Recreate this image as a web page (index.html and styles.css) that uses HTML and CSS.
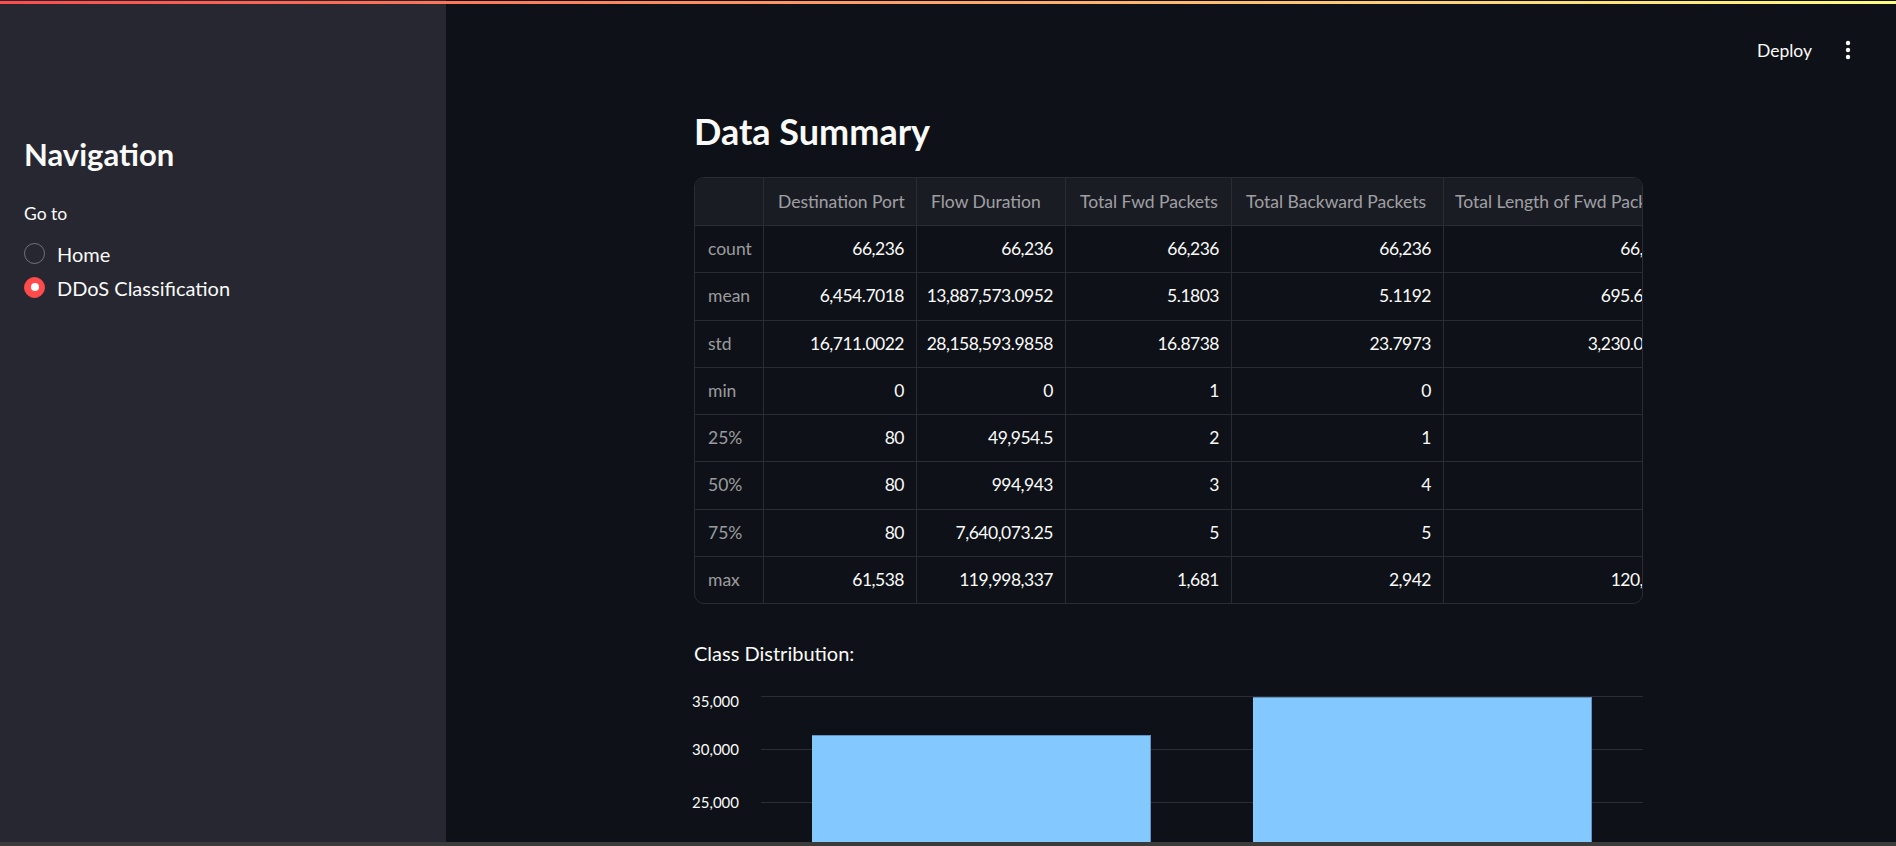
FILE: index.html
```html
<!DOCTYPE html>
<html lang="en">
<head>
<meta charset="utf-8">
<title>DDoS Classification</title>
<link rel="stylesheet" href="styles.css">
</head>
<body>
<div class="decoration"></div>
<div class="app">
  <aside class="sidebar">
    <h1 class="side-title">Navigation</h1>
    <p class="field-label">Go to</p>
    <div class="radio-group">
      <div class="radio"><span class="radio-dot"></span><span>Home</span></div>
      <div class="radio checked"><span class="radio-dot"></span><span>DDoS Classification</span></div>
    </div>
  </aside>
  <main class="main">
    <header class="topbar">
      <span class="deploy">Deploy</span>
      <span class="kebab">
        <svg width="24" height="24" viewBox="0 0 24 24"><circle cx="12" cy="5" r="2.2" fill="#fafafa"/><circle cx="12" cy="12" r="2.2" fill="#fafafa"/><circle cx="12" cy="19" r="2.2" fill="#fafafa"/></svg>
      </span>
    </header>
    <section class="content">
      <h2 class="page-title">Data Summary</h2>
      <div class="table-wrap">
        <table class="summary">
          <colgroup>
            <col class="c-idx"><col class="c-1"><col class="c-2"><col class="c-3"><col class="c-4"><col class="c-5">
          </colgroup>
          <thead>
            <tr><th></th><th>Destination Port</th><th>Flow Duration</th><th>Total Fwd Packets</th><th>Total Backward Packets</th><th class="last">Total Length of Fwd Packets</th></tr>
          </thead>
          <tbody>
            <tr><td class="idx">count</td><td>66,236</td><td>66,236</td><td>66,236</td><td>66,236</td><td>66,236</td></tr>
            <tr><td class="idx">mean</td><td>6,454.7018</td><td>13,887,573.0952</td><td>5.1803</td><td>5.1192</td><td>695.6248</td></tr>
            <tr><td class="idx">std</td><td>16,711.0022</td><td>28,158,593.9858</td><td>16.8738</td><td>23.7973</td><td>3,230.0917</td></tr>
            <tr><td class="idx">min</td><td>0</td><td>0</td><td>1</td><td>0</td><td>0</td></tr>
            <tr><td class="idx">25%</td><td>80</td><td>49,954.5</td><td>2</td><td>1</td><td>12</td></tr>
            <tr><td class="idx">50%</td><td>80</td><td>994,943</td><td>3</td><td>4</td><td>30</td></tr>
            <tr><td class="idx">75%</td><td>80</td><td>7,640,073.25</td><td>5</td><td>5</td><td>36</td></tr>
            <tr><td class="idx">max</td><td>61,538</td><td>119,998,337</td><td>1,681</td><td>2,942</td><td>120,564</td></tr>
          </tbody>
        </table>
      </div>
      <p class="caption">Class Distribution:</p>
      <div class="chart">
        <div class="y-axis">
          <span>35,000</span><span>30,000</span><span>25,000</span><span>20,000</span><span>15,000</span><span>10,000</span><span>5,000</span><span>0</span>
        </div>
        <div class="plot">
          <div class="band"><div class="bar" style="height:333px"></div></div>
          <div class="band"><div class="bar" style="height:371px"></div></div>
        </div>
      </div>
    </section>
  </main>
</div>
<div class="hscroll"></div>
</body>
</html>
```
FILE: styles.css
```css
html, body {
  margin: 0;
  height: 100%;
  overflow: hidden;
}
body {
  background: #0e1117;
  color: #fafafa;
  font-family: Lato, "Source Sans Pro", sans-serif;
}
.decoration {
  position: fixed;
  top: 1px;
  left: 0;
  right: 0;
  height: 3px;
  background: linear-gradient(90deg, #ff4b4b, #fffd80);
  z-index: 10;
}
.hscroll {
  position: fixed;
  left: 0;
  right: 0;
  bottom: 0;
  height: 4px;
  background: #3b3b3b;
  z-index: 10;
}
.app {
  display: flex;
  height: 846px;
}

/* Sidebar */
.sidebar {
  width: 446px;
  flex: none;
  box-sizing: border-box;
  background: #262730;
  padding: 136.4px 24px 0 24px;
}
.side-title {
  margin: 0;
  font-size: 31px;
  line-height: 37.2px;
  font-weight: 700;
}
.field-label {
  margin: 29px 0 0;
  font-size: 17.5px;
  line-height: 21px;
}
.radio-group {
  margin-top: 13.6px;
  display: flex;
  flex-direction: column;
}
.radio {
  display: flex;
  align-items: center;
  gap: 12px;
  height: 34px;
  font-size: 20px;
  line-height: 24px;
}
.radio-dot {
  width: 21px;
  height: 21px;
  flex: none;
  box-sizing: border-box;
  border-radius: 50%;
  border: 1.5px solid rgba(250, 250, 250, 0.35);
  display: flex;
  align-items: center;
  justify-content: center;
  margin-bottom: 2px;
}
.radio.checked .radio-dot {
  background: #ff4b4b;
  border-color: #ff4b4b;
}
.radio.checked .radio-dot::after {
  content: "";
  width: 8px;
  height: 8px;
  border-radius: 50%;
  background: #ffffff;
}

/* Main */
.main {
  flex: 1;
  min-width: 0;
  position: relative;
}
.topbar {
  position: absolute;
  top: 0;
  right: 36px;
  height: 100px;
  display: flex;
  align-items: center;
  gap: 24px;
}
.deploy {
  font-size: 17.5px;
  line-height: 21px;
}
.kebab {
  display: flex;
  width: 24px;
  height: 24px;
}
.content {
  margin-left: 248px;
  width: 949px;
  padding-top: 109.5px;
}
.page-title {
  margin: 0;
  font-size: 36px;
  line-height: 43.2px;
  font-weight: 700;
}

/* Table */
.table-wrap {
  margin-top: 24.3px;
  border: 1px solid #2a2c34;
  border-radius: 10px;
  overflow: hidden;
}
.summary {
  table-layout: fixed;
  width: 989px;
  border-collapse: separate;
  border-spacing: 0;
  font-size: 17.5px;
}
.c-idx { width: 69px; }
.c-1 { width: 153px; }
.c-2 { width: 149px; }
.c-3 { width: 166px; }
.c-4 { width: 212px; }
.c-5 { width: 240px; }
.summary th,
.summary td {
  border-right: 1px solid #2a2c34;
  border-bottom: 1px solid #2a2c34;
  white-space: nowrap;
  overflow: hidden;
  padding: 0;
}
.summary th {
  background: #1a1c24;
  color: rgba(250, 250, 250, 0.6);
  font-weight: 400;
  text-align: left;
  line-height: 47px;
  padding-left: 14px;
}
.summary th.last {
  padding-left: 11px;
}
.summary td {
  line-height: 46.3px;
  text-align: right;
  padding-right: 12px;
  letter-spacing: -0.5px;
}
.summary td.idx {
  text-align: left;
  padding: 0 0 0 13px;
  color: rgba(250, 250, 250, 0.6);
  letter-spacing: 0;
}
.summary tr > :last-child {
  border-right: none;
}
.summary tbody tr:last-child td {
  border-bottom: none;
}

/* Chart */
.caption {
  margin: 37px 0 0;
  font-size: 20px;
  line-height: 24px;
}
.chart {
  margin-top: 27px;
  display: flex;
  gap: 22px;
}
.y-axis {
  width: 45px;
  flex: none;
  display: flex;
  flex-direction: column;
  align-items: flex-end;
  font-size: 15px;
  line-height: 18px;
}
.y-axis span {
  height: 53px;
  flex: none;
}
.y-axis span:first-child {
  height: 47.4px;
}
.plot {
  flex: 1;
  margin-top: 4px;
  height: 372px;
  display: flex;
  align-items: flex-end;
  background: repeating-linear-gradient(to bottom, #2b2d35 0, #2b2d35 1px, transparent 1px, transparent 53px);
}
.band {
  flex: 1;
  padding: 0 51px;
  display: flex;
  align-items: flex-end;
  height: 100%;
}
.bar {
  width: 100%;
  background: #83c9ff;
  box-shadow: inset 0 1px 0 #5f94c2, inset -1px 0 0 #5f94c2;
}
```
